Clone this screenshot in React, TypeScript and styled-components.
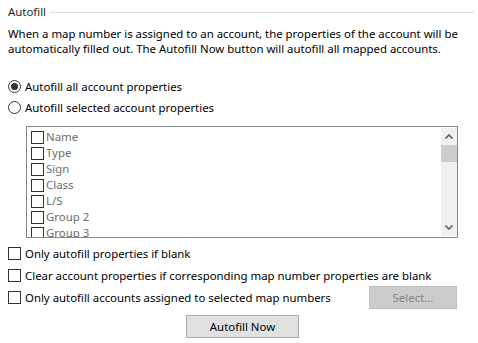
import React from "react";
import styled, { createGlobalStyle } from "styled-components";

const Global = createGlobalStyle`
  html, body { margin: 0; padding: 0; background: #ffffff; }
  body { font-family: "Noto Sans", "Segoe UI", sans-serif; font-size: 11.4px; line-height: 15px; color: #000; }
  * { box-sizing: border-box; }
`;

const Page = styled.div`
  width: 478px;
  height: 343px;
  padding: 4px 4px 0 8px;
  display: flex;
  flex-direction: column;
  align-items: flex-start;
  overflow: hidden;
  white-space: nowrap;
`;

const Header = styled.div`
  display: flex;
  align-items: center;
  align-self: stretch;
  height: 16px;
  gap: 4px;
`;

const Title = styled.span`
  color: #1e1e1e;
  line-height: 16px;
`;

const Rule = styled.div`
  flex: 1;
  height: 1px;
  background: #dcdcdc;
`;

const Description = styled.p`
  margin: 6px 0 0 0;
  line-height: 15px;
`;

const RadioGroup = styled.div`
  margin-top: 20px;
  display: flex;
  flex-direction: column;
`;

const OptionRow = styled.label<{ $h?: number }>`
  display: flex;
  align-items: center;
  align-self: stretch;
  gap: 4px;
  height: ${(p) => p.$h ?? 21}px;
`;

const RadioCircle = styled.span<{ $checked?: boolean }>`
  width: 13px;
  height: 13px;
  border: 1px solid #333333;
  border-radius: 50%;
  display: flex;
  align-items: center;
  justify-content: center;
  background: #fff;
  flex: none;
  &::after {
    content: "";
    width: 7px;
    height: 7px;
    border-radius: 50%;
    background: ${(p) => (p.$checked ? "#333333" : "transparent")};
  }
`;

const Box = styled.span`
  width: 13px;
  height: 13px;
  border: 1px solid #333333;
  background: #fff;
  flex: none;
`;

const ListBox = styled.div`
  margin: 8px 0 0 18px;
  width: 432px;
  height: 112px;
  border: 1px solid #828790;
  display: flex;
  background: #fff;
`;

const Items = styled.div`
  flex: 1;
  overflow: hidden;
  padding: 2px 0 0 4px;
  display: flex;
  flex-direction: column;
`;

const Item = styled.div`
  display: flex;
  align-items: center;
  gap: 2px;
  height: 16px;
  flex: none;
  color: #6d6d6d;
  line-height: 16px;
`;

const ScrollBar = styled.div`
  width: 16px;
  margin: 1px 0;
  background: #f0f0f0;
  display: flex;
  flex-direction: column;
`;

const Arrow = styled.div`
  height: 17px;
  display: flex;
  align-items: center;
  justify-content: center;
  flex: none;
`;

const Thumb = styled.div`
  height: 17px;
  background: #cdcdcd;
  flex: none;
`;

const Track = styled.div`
  flex: 1;
`;

const Options = styled.div`
  margin-top: 4px;
  display: flex;
  flex-direction: column;
  align-self: stretch;
`;

const Spacer = styled.div`
  flex: 1;
`;

const Button = styled.button<{ $disabled?: boolean }>`
  font: inherit;
  height: 23px;
  padding: 0;
  border: 1px solid ${(p) => (p.$disabled ? "#bfbfbf" : "#adadad")};
  background: ${(p) => (p.$disabled ? "#cccccc" : "#e1e1e1")};
  color: ${(p) => (p.$disabled ? "#838383" : "#000")};
  flex: none;
`;

const SelectButton = styled(Button)`
  width: 88px;
  margin-right: 17px;
`;

const NowButton = styled(Button)`
  width: 113px;
  margin: 6px 0 0 178px;
`;

const items = ["Name", "Type", "Sign", "Class", "L/S", "Group 2", "Group 3"];

export default function App() {
  return (
    <>
      <Global />
      <Page>
        <Header>
          <Title>Autofill</Title>
          <Rule />
        </Header>
        <Description>
          When a map number is assigned to an account, the properties of the account will be
          <br />
          automatically filled out. The Autofill Now button will autofill all mapped accounts.
        </Description>
        <RadioGroup>
          <OptionRow>
            <RadioCircle $checked />
            Autofill all account properties
          </OptionRow>
          <OptionRow>
            <RadioCircle />
            Autofill selected account properties
          </OptionRow>
        </RadioGroup>
        <ListBox>
          <Items>
            {items.map((it) => (
              <Item key={it}>
                <Box />
                {it}
              </Item>
            ))}
          </Items>
          <ScrollBar>
            <Arrow>
              <svg width="8" height="5" viewBox="0 0 8 5">
                <path d="M0.5 4.5 L4 1 L7.5 4.5" fill="none" stroke="#606060" strokeWidth="1.6" />
              </svg>
            </Arrow>
            <Thumb />
            <Track />
            <Arrow>
              <svg width="8" height="5" viewBox="0 0 8 5">
                <path d="M0.5 0.5 L4 4 L7.5 0.5" fill="none" stroke="#606060" strokeWidth="1.6" />
              </svg>
            </Arrow>
          </ScrollBar>
        </ListBox>
        <Options>
          <OptionRow $h={22}>
            <Box />
            Only autofill properties if blank
          </OptionRow>
          <OptionRow $h={22}>
            <Box />
            Clear account properties if corresponding map number properties are blank
          </OptionRow>
          <OptionRow $h={23}>
            <Box />
            Only autofill accounts assigned to selected map numbers
            <Spacer />
            <SelectButton $disabled>Select...</SelectButton>
          </OptionRow>
        </Options>
        <NowButton>Autofill Now</NowButton>
      </Page>
    </>
  );
}
